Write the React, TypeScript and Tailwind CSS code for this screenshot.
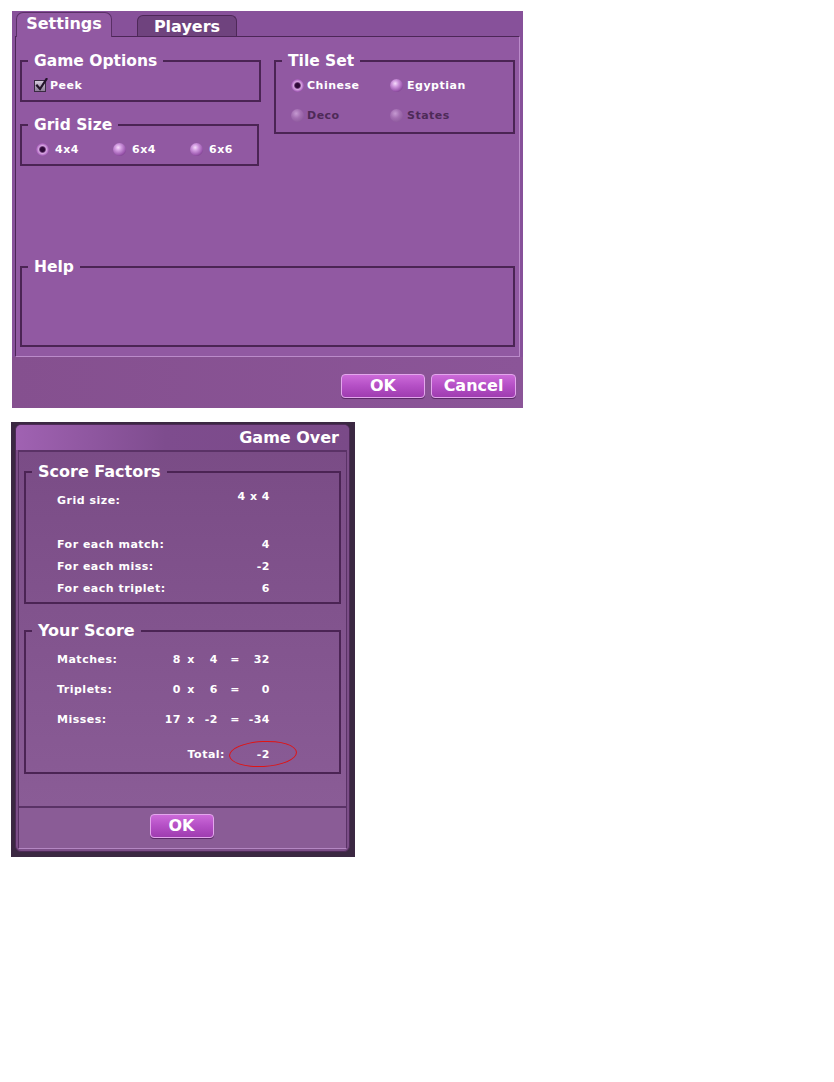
import React from "react";

const font = "font-['DejaVu_Sans',sans-serif]";

function Radio({ checked = false, disabled = false }: { checked?: boolean; disabled?: boolean }) {
  let cls = "";
  if (disabled) {
    cls =
      "bg-[radial-gradient(circle_at_40%_35%,#d2aadd_0%,#a874b6_40%,#7e4c8e_100%)] opacity-80";
  } else if (checked) {
    cls =
      "bg-[radial-gradient(circle_at_50%_50%,#2e0a38_0%,#2e0a38_22%,#5a2a66_30%,#d9a8e4_42%,#a862bb_65%,#4a1a58_100%)]";
  } else {
    cls =
      "bg-[radial-gradient(circle_at_40%_35%,#f6dcfb_0%,#cf97de_28%,#9a56ad_65%,#4e1e5c_100%)]";
  }
  return <span className={`inline-block w-[13px] h-[13px] rounded-full shrink-0 ${cls}`} />;
}

function Checkbox() {
  return (
    <span className="relative inline-block w-[12px] h-[12px] shrink-0 border border-[#3a2a42] bg-gradient-to-b from-[#d6cadc] to-[#8e7e98]">
      <svg className="absolute left-[0px] top-[-3px]" width="13" height="14" viewBox="0 0 13 14">
        <path d="M2 7.5 L5 11 L11.5 1" fill="none" stroke="#24142a" strokeWidth="2.2" strokeLinecap="square" />
      </svg>
    </span>
  );
}

function Button({ label, w }: { label: string; w: string }) {
  return (
    <div
      className={`${w} h-[24px] rounded-[4px] border border-[#e3a6ec] bg-gradient-to-b from-[#cc6ad9] via-[#b44fc5] to-[#9f3cb0] flex items-center justify-center text-white font-bold text-[16px] leading-none shadow-[0_1px_0_#5a2a66]`}
    >
      {label}
    </div>
  );
}

function Fieldset({
  title,
  className = "",
  legendClass = "leading-[20px] text-[15.5px]",
  children,
}: {
  title: string;
  className?: string;
  legendClass?: string;
  children?: React.ReactNode;
}) {
  return (
    <fieldset className={`border-2 border-[#4b2454] min-w-0 ${className}`}>
      <legend className={`ml-[6px] px-[6px] font-bold text-white ${legendClass}`}>{title}</legend>
      {children}
    </fieldset>
  );
}

const label = "text-[11px] font-bold tracking-[0.5px] text-white leading-none";

function Settings() {
  return (
    <div className="w-[511px] h-[397px] bg-[#87519a] flex flex-col">
      {/* tabs */}
      <div className="h-[25px] flex items-end pl-[4px]">
        <div className="relative z-10 -mb-px w-[96px] h-[25px] bg-[#9159a2] rounded-t-[7px] border border-b-0 border-[#5a2f66] flex justify-center pt-[1px] text-white font-bold text-[16px] leading-[20px]">
          Settings
        </div>
        <div className="ml-[25px] w-[100px] h-[21px] bg-[#6f437e] rounded-t-[6px] border border-b-0 border-[#4e2858] flex justify-center pt-[1px] text-white font-bold text-[16px] leading-[20px]">
          Players
        </div>
      </div>
      {/* panel */}
      <div className="ml-[3px] w-[505px] h-[321px] bg-[#9159a2] border border-[#bb8bca] border-t-[#4c2657] border-l-[#4c2657] flex flex-col px-[4px] pt-[14px] pb-[9px]">
        <div className="flex gap-[13px] items-start">
          <div className="w-[241px] flex flex-col gap-[13px]">
            <Fieldset title="Game Options">
              <div className="h-[29px] flex items-center pl-[12px] gap-[4px]">
                <Checkbox />
                <span className={label}>Peek</span>
              </div>
            </Fieldset>
            <Fieldset title="Grid Size" className="w-[239px]">
              <div className="h-[29px] flex items-center pl-[14px]">
                {["4x4", "6x4", "6x6"].map((g, i) => (
                  <div key={g} className={`${i < 2 ? "w-[77px]" : ""} flex items-center gap-[6px]`}>
                    <Radio checked={i === 0} />
                    <span className={label}>{g}</span>
                  </div>
                ))}
              </div>
            </Fieldset>
          </div>
          <Fieldset title="Tile Set" className="w-[241px]">
            <div className="h-[61px] flex flex-col pl-[15px]">
              <div className="h-[28px] flex items-center">
                <div className="w-[99px] flex items-center gap-[3px]">
                  <Radio checked />
                  <span className={label}>Chinese</span>
                </div>
                <div className="flex items-center gap-[4px]">
                  <Radio />
                  <span className={label}>Egyptian</span>
                </div>
              </div>
              <div className="h-[31px] flex items-center pt-[1px]">
                <div className="w-[99px] flex items-center gap-[3px]">
                  <Radio disabled />
                  <span className="text-[11px] font-bold tracking-[0.5px] text-[#4e2a58] leading-none">Deco</span>
                </div>
                <div className="flex items-center gap-[4px]">
                  <Radio disabled />
                  <span className="text-[11px] font-bold tracking-[0.5px] text-[#4e2a58] leading-none">States</span>
                </div>
              </div>
            </div>
          </Fieldset>
        </div>
        <Fieldset title="Help" className="mt-auto">
          <div className="h-[68px]" />
        </Fieldset>
      </div>
      {/* buttons */}
      <div className="flex-1 flex justify-end items-start pt-[17px] pr-[7px] gap-[6px] bg-gradient-to-r from-[#85508f] to-[#8b5598]">
        <Button label="OK" w="w-[84px]" />
        <Button label="Cancel" w="w-[85px]" />
      </div>
    </div>
  );
}

function FactorRow({ l, v, up = false }: { l: string; v: string; up?: boolean }) {
  return (
    <div className="h-[22px] flex items-center w-[244px] pl-[31px] justify-between">
      <span className={label}>{l}</span>
      <span className={`${label} whitespace-pre ${up ? "mb-[8px]" : ""}`}>{v}</span>
    </div>
  );
}

function ScoreRow({ l, a, b, r }: { l: string; a: string; b: string; r: string }) {
  return (
    <div className="h-[30px] flex items-center pl-[31px]">
      <span className={`${label} w-[105px]`}>{l}</span>
      <span className={`${label} w-[19px] text-right`}>{a}</span>
      <span className={`${label} w-[20px] text-center`}>x</span>
      <span className={`${label} w-[23px] text-right pr-[6px]`}>{b}</span>
      <span className={`${label} w-[22px] text-center`}>=</span>
      <span className={`${label} w-[24px] text-right whitespace-nowrap`}>{r}</span>
    </div>
  );
}

function GameOver() {
  return (
    <div className="w-[344px] h-[435px] bg-[#3b2842] pl-[4px] pt-[2px] pr-[5px] pb-[5px]">
      <div className="h-full rounded-[6px] border border-[#4e2a58] bg-[#7c4e88] flex flex-col overflow-hidden">
        <div className="h-[25px] shrink-0 bg-gradient-to-r from-[#a062b2] via-[#7e4c8e] via-45% to-[#7a4a88] flex items-center justify-end pr-[10px] text-white font-bold text-[16px] leading-none">
          Game Over
        </div>
        <div className="flex-1 mx-[2px] mb-[2px] border-t-2 border-x border-b border-[#5a3266] border-b-[#b487c2] flex flex-col">
          <div className="flex-1 flex flex-col px-[5px] pt-[9px] bg-gradient-to-b from-[#7a4c86] to-[#8a5c96]">
            <Fieldset title="Score Factors" legendClass="leading-[22px] text-[16px]">
              <div className="pt-[6px] pb-[3px]">
                <FactorRow l="Grid size:" v="4 x 4" up />
                <div className="h-[22px]" />
                <FactorRow l="For each match:" v="4" />
                <FactorRow l="For each miss:" v="-2" />
                <FactorRow l="For each triplet:" v="6" />
              </div>
            </Fieldset>
            <Fieldset title="Your Score" className="mt-[16px]" legendClass="leading-[22px] text-[16px]">
              <div className="pt-[2px] pb-[3px]">
                <ScoreRow l="Matches:" a="8" b="4" r="32" />
                <ScoreRow l="Triplets:" a="0" b="6" r="0" />
                <ScoreRow l="Misses:" a="17" b="-2" r="-34" />
                <div className="mt-[5px] h-[30px] flex items-center pl-[31px]">
                  <span className={`${label} w-[168px] text-right`}>Total:</span>
                  <div className="relative w-[45px] h-[30px] flex items-center justify-end">
                    <span className={label}>-2</span>
                    <span className="absolute left-[4px] top-[2px] w-[68px] h-[26px] rounded-[50%] border-[1.5px] border-[#e01414] -rotate-3" />
                  </div>
                </div>
              </div>
            </Fieldset>
          </div>
          <div className="h-[42px] shrink-0 border-t-2 border-[#5a3266] bg-[#8a5c96] flex justify-center pt-[6px] pr-[2px]">
            <Button label="OK" w="w-[64px]" />
          </div>
        </div>
      </div>
    </div>
  );
}

export default function App() {
  return (
    <div className={`w-[834px] h-[1082px] bg-white ${font} flex flex-col`}>
      <div className="ml-[12px] mt-[11px]">
        <Settings />
      </div>
      <div className="ml-[11px] mt-[14px]">
        <GameOver />
      </div>
    </div>
  );
}
